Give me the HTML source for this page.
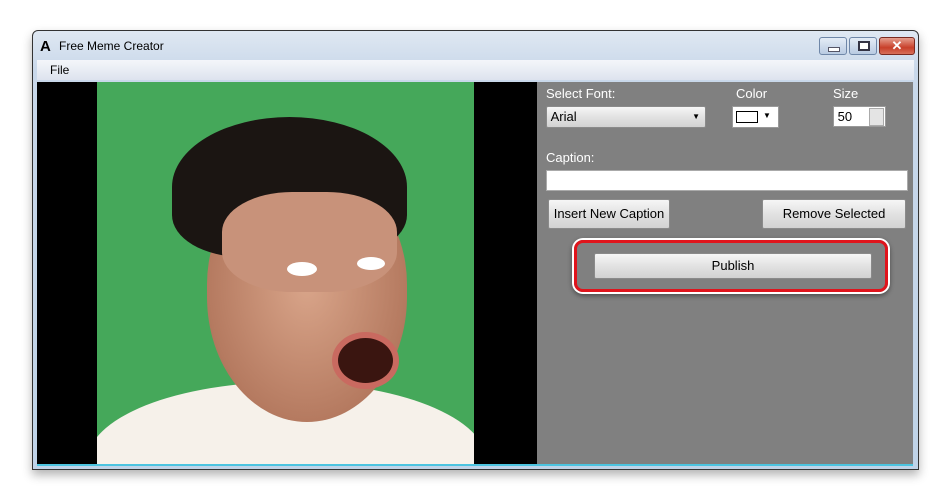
<!DOCTYPE html>
<html><head><style>
body{margin:0;width:951px;height:502px;background:#fff;position:relative;overflow:hidden;font-family:"Liberation Sans",sans-serif;}
.win{position:absolute;left:32px;top:30px;width:885px;height:438px;border:1px solid #333;border-radius:6px 6px 0 0;background:linear-gradient(#dfe8f2,#c9d8ea 40px,#bfd3e8);box-shadow:0 5px 10px rgba(0,0,0,.3);}
.title{position:absolute;left:26px;top:8px;font-size:12px;color:#000;}
.logo{position:absolute;left:7px;top:7px;font-size:15px;font-weight:bold;}
.menu{position:absolute;left:4px;top:29px;width:877px;height:20px;background:linear-gradient(#f4f6fa,#dde3ee);}
.menu span{position:absolute;left:13px;top:3px;font-size:12px;}
.client{position:absolute;left:4px;top:51px;width:876px;height:382px;background:#000;border-bottom:2px solid #4cc4e0;}
.img{position:absolute;left:60px;top:0;width:377px;height:382px;background:#45a85a;overflow:hidden;}
.panel{position:absolute;left:500px;top:0;width:376px;height:382px;background:#808080;}
.lbl{position:absolute;color:#fff;font-size:13px;}
.btn{position:absolute;background:linear-gradient(#f6f6f6,#e2e2e2 50%,#d2d2d2);border:1px solid #8a8a8a;border-radius:2px;font-size:13px;text-align:center;color:#000;}
.wb{position:absolute;top:6px;height:16px;border:1px solid #6f87a8;border-radius:3px;background:linear-gradient(#e4ecf6,#b9cbe2);}
</style></head><body>
<div class="win">
 <div class="logo">A</div>
 <div class="title">Free Meme Creator</div>
 <div class="wb" style="left:786px;width:26px"><div style="position:absolute;left:8px;top:9px;width:10px;height:3px;background:#fff;border:1px solid #556"></div></div>
 <div class="wb" style="left:816px;width:26px"><div style="position:absolute;left:8px;top:3px;width:8px;height:6px;border:2px solid #334;background:#fff"></div></div>
 <div class="wb" style="left:846px;width:34px;border-color:#7a2a20;background:linear-gradient(#e6a08f,#c8402a 60%,#d7705a);color:#fff;font-weight:bold;font-size:13px;text-align:center;line-height:16px">✕</div>
 <div class="menu"><span>File</span></div>
 <div class="client">
  <div class="img">
   <div style="position:absolute;left:-10px;top:300px;width:400px;height:160px;border-radius:50% 50% 0 0;background:#f6f1ea"></div>
   <div style="position:absolute;left:110px;top:90px;width:200px;height:250px;border-radius:45% 45% 50% 50%;background:radial-gradient(ellipse at 50% 45%,#d9a58a,#b57a60 70%,#8c5a45)"></div>
   <div style="position:absolute;left:75px;top:35px;width:235px;height:140px;border-radius:50% 50% 30% 30%;background:#1b1512"></div>
   <div style="position:absolute;left:125px;top:110px;width:175px;height:100px;border-radius:40%;background:#c8927a"></div>
   <div style="position:absolute;left:235px;top:250px;width:55px;height:45px;border-radius:50%;background:#3a1510;border:6px solid #c96a60"></div>
   <div style="position:absolute;left:190px;top:180px;width:30px;height:14px;border-radius:50%;background:#fff"></div>
   <div style="position:absolute;left:260px;top:175px;width:28px;height:13px;border-radius:50%;background:#fff"></div>
  </div>
  <div class="panel">
   <div class="lbl" style="left:9px;top:4px">Select Font:</div>
   <div class="lbl" style="left:199px;top:4px">Color</div>
   <div class="lbl" style="left:296px;top:4px">Size</div>
   <div class="btn" style="left:9px;top:24px;width:158px;height:20px;text-align:left;line-height:20px;font-size:13px">&nbsp;Arial<span style="position:absolute;right:5px;font-size:8px">▼</span></div>
   <div style="position:absolute;left:195px;top:24px;width:45px;height:20px;background:#fff;border:1px solid #999"><div style="position:absolute;left:3px;top:4px;width:20px;height:10px;border:1px solid #000"></div><span style="position:absolute;left:30px;top:4px;font-size:8px">▼</span></div>
   <div style="position:absolute;left:296px;top:24px;width:51px;height:19px;background:#fff;border:1px solid #999;font-size:13px;line-height:19px">&nbsp;50<div style="position:absolute;right:1px;top:1px;width:13px;height:16px;background:#e4e4e4;border:1px solid #aaa"></div></div>
   <div class="lbl" style="left:9px;top:68px">Caption:</div>
   <div style="position:absolute;left:9px;top:88px;width:360px;height:19px;background:#fff;border:1px solid #aaa"></div>
   <div class="btn" style="left:11px;top:117px;width:120px;height:28px;line-height:28px">Insert New Caption</div>
   <div class="btn" style="left:225px;top:117px;width:142px;height:28px;line-height:28px">Remove Selected</div>
   <div style="position:absolute;left:37px;top:158px;width:308px;height:46px;border:3px solid #e0141c;border-radius:9px;box-shadow:0 0 0 2px #fff,0 2px 5px 2px rgba(0,0,0,.4)"></div>
   <div class="btn" style="left:57px;top:171px;width:276px;height:24px;line-height:24px">Publish</div>
  </div>
 </div>
</div>
</body></html>
